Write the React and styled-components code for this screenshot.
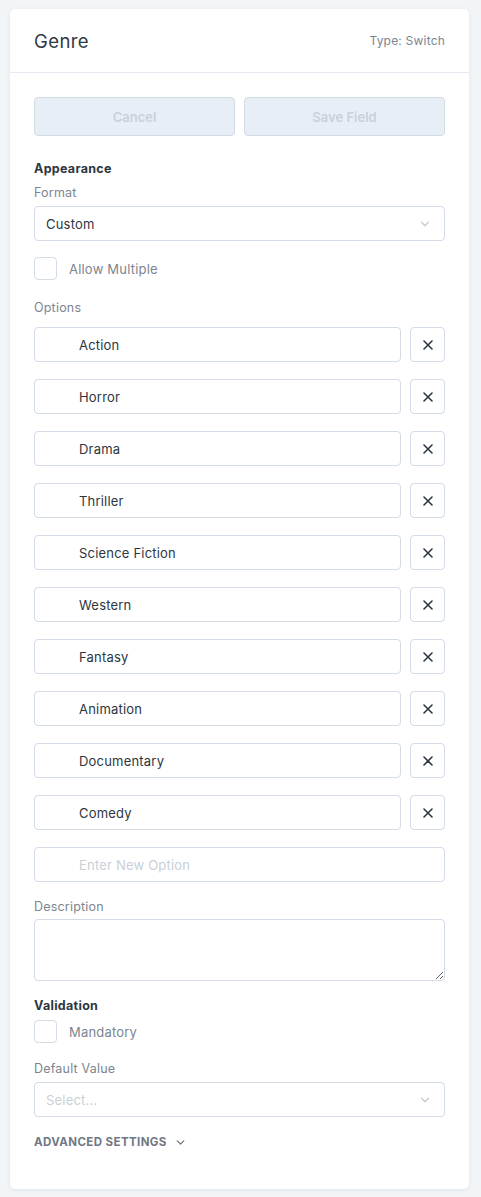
import React from 'react';
import styled, { createGlobalStyle } from 'styled-components';

const GlobalStyle = createGlobalStyle`
  html, body {
    margin: 0;
    padding: 0;
    background: #f2f5f8;
    font-family: Inter, "Noto Sans", sans-serif;
    color: #2d3640;
  }
`;

const Page = styled.div`
  padding: 9px 12px 8px 10px;
`;

const Card = styled.div`
  background: #fff;
  border-radius: 5px;
  box-shadow: 0 1px 4px rgba(30, 50, 80, 0.08);
  min-height: 1180px;
  box-sizing: border-box;
`;

const Header = styled.header`
  display: flex;
  justify-content: space-between;
  align-items: center;
  height: 63px;
  padding: 0 24px;
  border-bottom: 1px solid #e4eaf0;
`;

const Title = styled.h1`
  margin: 0;
  font-size: 18.5px;
  font-weight: 400;
  letter-spacing: 0.4px;
  color: #2f3944;
`;

const TypeLabel = styled.span`
  font-size: 12px;
  color: #7c8590;
  letter-spacing: 0.2px;
`;

const Body = styled.div`
  padding: 24px 24px 0;
  display: flex;
  flex-direction: column;
`;

const ButtonRow = styled.div`
  display: grid;
  grid-template-columns: 1fr 1fr;
  gap: 9px;
  margin-bottom: 25px;
`;

const Button = styled.button`
  height: 39px;
  border: 1px solid #d3dbe4;
  border-radius: 4px;
  background: #e8eef5;
  color: #c8d1dc;
  font-family: inherit;
  font-size: 13px;
  font-weight: 600;
`;

const SectionTitle = styled.h3`
  margin: 0 0 ${({ $mb }) => $mb ?? 9}px;
  font-size: 12.5px;
  font-weight: 700;
  color: #2d3640;
  letter-spacing: 0.3px;
`;

const Label = styled.div`
  font-size: 12.5px;
  color: #7c8590;
  letter-spacing: 0.2px;
  margin-bottom: ${({ $mb }) => $mb ?? 6}px;
`;

const Select = styled.div`
  display: flex;
  align-items: center;
  justify-content: space-between;
  height: 35px;
  box-sizing: border-box;
  border: 1px solid #d3dbe4;
  border-radius: 4px;
  padding: 0 12px 0 11px;
  font-size: 13px;
  letter-spacing: 0.2px;
  color: ${({ $placeholder }) => ($placeholder ? '#c9d0d8' : '#2d3640')};
`;

const CheckRow = styled.label`
  display: flex;
  align-items: center;
  gap: 12px;
  font-size: 13px;
  letter-spacing: 0.2px;
  color: #7c8590;
  margin: ${({ $m }) => $m};
`;

const Box = styled.span`
  width: 23px;
  height: 23px;
  box-sizing: border-box;
  border: 1px solid #d3dbe4;
  border-radius: 4px;
`;

const OptionList = styled.div`
  display: flex;
  flex-direction: column;
  gap: 17px;
  margin-bottom: 17px;
`;

const OptionRow = styled.div`
  display: grid;
  grid-template-columns: 1fr 35px;
  gap: 9px;
`;

const OptionInput = styled.div`
  height: 35px;
  box-sizing: border-box;
  border: 1px solid #d3dbe4;
  border-radius: 4px;
  padding-left: 44px;
  display: flex;
  align-items: center;
  font-size: 13px;
  letter-spacing: 0.2px;
  color: ${({ $placeholder }) => ($placeholder ? '#c9d0d8' : '#2d3640')};
`;

const RemoveButton = styled.button`
  height: 35px;
  border: 1px solid #d3dbe4;
  border-radius: 4px;
  background: #fff;
  display: flex;
  align-items: center;
  justify-content: center;
  padding: 0;
`;

const TextArea = styled.textarea`
  height: 62px;
  box-sizing: border-box;
  border: 1px solid #d3dbe4;
  border-radius: 4px;
  margin: 0 0 17px;
  font-family: inherit;
`;

const Advanced = styled.div`
  display: flex;
  align-items: center;
  gap: 7px;
  margin-top: 18px;
  font-size: 11.5px;
  font-weight: 700;
  letter-spacing: 0.4px;
  color: #6f7883;
`;

const Chevron = ({ color = '#c6cdd5', size = 14 }) => (
  <svg width={size} height={size} viewBox="0 0 24 24" fill="none" stroke={color} strokeWidth="2.5" strokeLinecap="round" strokeLinejoin="round">
    <path d="M6 9l6 6 6-6" />
  </svg>
);

const Cross = () => (
  <svg width="12" height="12" viewBox="0 0 12 12" stroke="#2d3640" strokeWidth="1.6" strokeLinecap="round">
    <path d="M2 2l8 8M10 2l-8 8" />
  </svg>
);

const options = ['Action', 'Horror', 'Drama', 'Thriller', 'Science Fiction', 'Western', 'Fantasy', 'Animation', 'Documentary', 'Comedy'];

export default function App() {
  return (
    <Page>
      <GlobalStyle />
      <Card>
        <Header>
          <Title>Genre</Title>
          <TypeLabel>Type: Switch</TypeLabel>
        </Header>
        <Body>
          <ButtonRow>
            <Button>Cancel</Button>
            <Button>Save Field</Button>
          </ButtonRow>

          <SectionTitle>Appearance</SectionTitle>
          <Label>Format</Label>
          <Select>
            Custom
            <Chevron />
          </Select>
          <CheckRow $m="16px 0 20px">
            <Box />
            Allow Multiple
          </CheckRow>

          <Label $mb={12}>Options</Label>
          <OptionList>
            {options.map((opt) => (
              <OptionRow key={opt}>
                <OptionInput>{opt}</OptionInput>
                <RemoveButton>
                  <Cross />
                </RemoveButton>
              </OptionRow>
            ))}
            <OptionInput $placeholder>Enter New Option</OptionInput>
          </OptionList>

          <Label $mb={5}>Description</Label>
          <TextArea />

          <SectionTitle $mb={7}>Validation</SectionTitle>
          <CheckRow $m="0 0 18px">
            <Box />
            Mandatory
          </CheckRow>
          <Label>Default Value</Label>
          <Select $placeholder>
            Select...
            <Chevron />
          </Select>
          <Advanced>
            ADVANCED SETTINGS
            <Chevron color="#6f7883" size={13} />
          </Advanced>
        </Body>
      </Card>
    </Page>
  );
}
